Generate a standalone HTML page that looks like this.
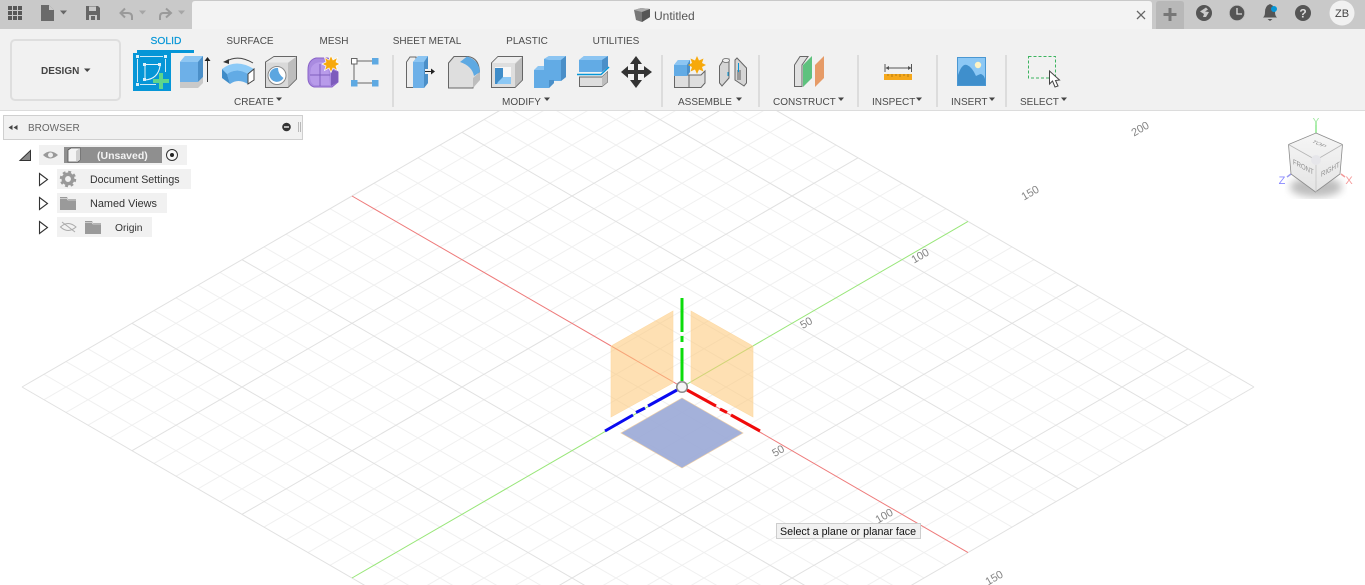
<!DOCTYPE html>
<html><head><meta charset="utf-8"><title>Untitled</title>
<style>
html,body{margin:0;padding:0;background:#fff;width:1365px;height:585px;overflow:hidden}
svg{display:block;font-family:"Liberation Sans",sans-serif}
text{fill:#4a4a4a;font-size:10px}
.c{text-anchor:middle}
.t{font-size:11px;fill:#858585}
</style></head><body>
<svg width="1365" height="585" viewBox="0 0 1365 585" xmlns="http://www.w3.org/2000/svg">
<defs>
<filter id="b"><feGaussianBlur stdDeviation="4"/></filter>
<clipPath id="v"><rect width="1365" height="585"/></clipPath>
<linearGradient id="cf" x1="0" y1="0" x2="0" y2="1"><stop offset="0" stop-color="#f6f6f6"/><stop offset="1" stop-color="#e4e4e4"/></linearGradient>
</defs>
<rect width="1365" height="585" fill="#fff"/>
<!-- grid -->
<g clip-path="url(#v)">
<g transform="matrix(1 .5788 1 -.5788 682 387)" fill="none">
<path vector-effect="non-scaling-stroke" stroke="#f0f0f0" stroke-width="1" d="M-308-330V286M-286-330V286M-264-330V286M-242-330V286M-198-330V286M-176-330V286M-154-330V286M-132-330V286M-88-330V286M-66-330V286M-44-330V286M-22-330V286M22-330V286M44-330V286M66-330V286M88-330V286M132-330V286M154-330V286M176-330V286M198-330V286M242-330V286M264-330V286M-330-308H286M-330-286H286M-330-264H286M-330-242H286M-330-198H286M-330-176H286M-330-154H286M-330-132H286M-330-88H286M-330-66H286M-330-44H286M-330-22H286M-330 22H286M-330 44H286M-330 66H286M-330 88H286M-330 132H286M-330 154H286M-330 176H286M-330 198H286M-330 242H286M-330 264H286"/>
<path vector-effect="non-scaling-stroke" stroke="#e1e1e1" stroke-width="1" d="M-330-330V286M-220-330V286M-110-330V286M110-330V286M220-330V286M286-330V286M-330-330H286M-330-220H286M-330-110H286M-330 110H286M-330 220H286M-330 286H286"/>
<path vector-effect="non-scaling-stroke" stroke="#ee7a7a" stroke-width="1" d="M-330 0H286"/>
<path vector-effect="non-scaling-stroke" stroke="#98e678" stroke-width="1" d="M0-330V286"/>
</g>
</g>
<!-- grid labels -->
<g font-size="11">
<text class="t c" transform="translate(1142 132) rotate(-30)">200</text>
<text class="t c" transform="translate(1032 196) rotate(-30)">150</text>
<text class="t c" transform="translate(922 259) rotate(-30)">100</text>
<text class="t c" transform="translate(808 326) rotate(-30)">50</text>
<text class="t c" transform="translate(780 454) rotate(-30)">50</text>
<text class="t c" transform="translate(886 519) rotate(-30)">100</text>
<text class="t c" transform="translate(996 581) rotate(-30)">150</text>
</g>
<!-- planes -->
<path d="M673 311L611 346V417L673 383Z" fill="#fdc878" fill-opacity=".56" stroke="#fcd9a5" stroke-width=".6"/>
<path d="M691 311L753 346V417L691 383Z" fill="#fdc878" fill-opacity=".56" stroke="#fcd9a5" stroke-width=".6"/>
<path d="M682 398L743 433L682 468L621 433Z" fill="#9aa8d6" fill-opacity=".9" stroke="#f0cfa5" stroke-width=".7"/>
<!-- axes -->
<path d="M682 298V332M682 336V342M682 348V381" stroke="#0cdc0c" stroke-width="3" fill="none"/>
<path d="M677 390L648 406M645 408L636 412.500M633 415L605 431" stroke="#0a0af0" stroke-width="3" fill="none"/>
<path d="M687 390L716 406M720 409L727 412.500M731 415L760 431" stroke="#f00a0a" stroke-width="3" fill="none"/>
<circle cx="682" cy="387" r="5.300" fill="#f6f6f6" stroke="#8a8a8a" stroke-width="1.500"/>
<!-- top bar -->
<rect width="1365" height="29" fill="#c9c9c9"/>
<path d="M192 29V4Q192 1 195 1H1149Q1152 1 1152 4V29Z" fill="#f3f3f3"/>
<rect x="0" y="29" width="1365" height="81" fill="#f1f1f1"/>
<rect x="0" y="110" width="1365" height="1" fill="#dcdcdc"/>
<!-- top-left icons -->
<g fill="#585858"><path d="M8 6h4v4H8zM13 6h4v4h-4zM18 6h4v4h-4zM8 11h4v4H8zM13 11h4v4h-4zM18 11h4v4h-4zM8 16h4v4H8zM13 16h4v4h-4zM18 16h4v4h-4z"/></g>
<path d="M41 5H49L54 10V21H41Z" fill="#6a6a6a"/>
<path d="M49 5V10H54Z" fill="#c9c9c9"/>
<path d="M60 10.500H67L63.500 14.500Z" fill="#666"/>
<path d="M86 6H98L100 8V20H86Z" fill="#666"/>
<path d="M89 6.500H96V11H89ZM89 15H97V20H89Z" fill="#c9c9c9"/>
<path d="M91 16H95V20H91Z" fill="#666"/>
<g fill="none" stroke="#9a9a9a" stroke-width="2">
<path d="M121 13H128Q132 13 132 17V20"/><path d="M125 8.500L120.500 13L125 17.500"/>
<path d="M170 13H163Q160 13 160 17V20"/><path d="M166 8.500L171 13L166 17.500"/>
</g>
<path d="M139 10.500H146L142.500 14.500ZM178 10.500H185L181.500 14.500Z" fill="#a6a6a6"/>
<!-- title -->
<path d="M634 10L641 8L650 9V17L642 22L636 20Z" fill="#777"/>
<path d="M634 10L641 8L650 9L642 12Z" fill="#aaa"/>
<path d="M642 12L650 9V17L642 22Z" fill="#555"/>
<text x="654" y="20" style="font-size:12px;fill:#555">Untitled</text>
<path d="M1137 11L1145 19M1145 11L1137 19" stroke="#666" stroke-width="1.300" fill="none"/>
<!-- right top -->
<path d="M1156 4Q1156 1 1159 1H1181Q1184 1 1184 4V29H1156Z" fill="#b8b8b8"/>
<path d="M1170 8V21M1163.500 14.500H1176.500" stroke="#777" stroke-width="3" fill="none"/>
<circle cx="1204" cy="13" r="8" fill="#555"/>
<path d="M1200 11.500L1206 7.500L1208 9.500L1205 11.500L1209 12L1206 17H1203L1204 14Z" fill="#c9c9c9"/>
<circle cx="1237" cy="13" r="7.500" fill="#555" stroke="#555"/>
<circle cx="1237" cy="13" r="7.700" fill="none" stroke="#c9c9c9" stroke-width=".7"/>
<path d="M1237 8V14H1242" stroke="#ddd" stroke-width="1.300" fill="none"/>
<path d="M1270 4Q1265 6 1265 12Q1265 16 1263 17.500H1277Q1275 16 1275 12Q1275 6 1270 4Z" fill="#555"/>
<path d="M1267.500 19H1272.500L1270 21Z" fill="#555"/>
<circle cx="1274" cy="9" r="3" fill="#0696d7"/>
<circle cx="1303" cy="13" r="8" fill="#555"/>
<text class="c" x="1303" y="17.500" style="font-size:12px;font-weight:bold;fill:#ddd">?</text>
<circle cx="1342" cy="13" r="12.500" fill="#f1f1f1"/>
<text class="c" x="1342" y="17" style="font-size:11px;fill:#444">ZB</text>
<!-- design button -->
<rect x="11" y="40" width="109" height="60" rx="4" fill="#f1f1f1" stroke="#dedede" stroke-width="2"/>
<text x="41" y="74" style="font-weight:bold;fill:#444">DESIGN</text>
<path d="M84 68.500H90.500L87.200 72Z" fill="#444"/>
<!-- tabs -->
<text class="c" x="166" y="44" style="fill:#0696d7;font-size:10.300px;stroke:#0696d7;stroke-width:.2">SOLID</text>
<text class="c" x="250" y="44">SURFACE</text>
<text class="c" x="334" y="44">MESH</text>
<text class="c" x="427" y="44">SHEET METAL</text>
<text class="c" x="527" y="44">PLASTIC</text>
<text class="c" x="616" y="44">UTILITIES</text>
<rect x="137" y="50" width="57" height="3" fill="#0696d7"/>
<!-- separators -->
<path d="M393 55V107M662 55V107M759 55V107M858 55V107M937 55V107M1006 55V107" stroke="#dcdcdc" stroke-width="2"/>
<!-- sketch icon -->
<rect x="133" y="53" width="38" height="38" fill="#0696d7"/>
<g fill="none" stroke="#cfeaf7" stroke-width="1">
<path d="M140 56.500H163M137.500 59V82M140 84.500H156M165.500 59V72"/>
<path d="M145 64.500H160M145 66V79M145 80Q158 79 160 66" stroke="#e8f5fb"/>
</g>
<path d="M136 55h3v3h-3zM164 55h3v3h-3zM136 83h3v3h-3zM143 63h3v3h-3zM158 63h3v3h-3zM143 78h3v3h-3z" fill="#dff0f9"/>
<path d="M159 73H163V79H169V83H163V89H159V83H153V79H159Z" fill="#5ed58c"/>
<!-- extrude -->
<path d="M180 62L185 56H203V77L198 82H180Z" fill="#6db0e8"/>
<path d="M180 62L185 56H203L198 62Z" fill="#8ec6f2"/>
<path d="M198 62L203 56V77L198 82Z" fill="#4b8fc8"/>
<path d="M180 82H198L203 77V83L198 88H180Z" fill="#c9c9c9"/>
<path d="M207.500 82V59" stroke="#333" stroke-width="1"/>
<path d="M204.500 61L207.500 57L210.500 61Z" fill="#222"/>
<!-- revolve -->
<path d="M222 69Q236 58 254 69L248 74Q237 67 227 74Z" fill="#8ccaf7"/>
<path d="M227 74Q237 67 248 74V84Q238 78 230 84Z" fill="#62abe5"/>
<path d="M222 69L227 74L230 84L222 78Z" fill="#3f8cc8"/>
<path d="M248 74L254 69V80L248 84Z" fill="#fff" stroke="#444" stroke-width="1"/>
<path d="M226 61.500Q238 54 253 63" fill="none" stroke="#444" stroke-width="1"/>
<path d="M223 62L229 59L229 64Z" fill="#333"/>
<!-- hole -->
<path d="M265.500 62L274 56.500H296.500V79L288 87.500H265.500Z" fill="#d9d9d9" stroke="#666" stroke-width="1"/>
<path d="M288 63V87L296 79V56.500Z" fill="#bdbdbd"/>
<path d="M266 62.500L274 57H296L288 62.500Z" fill="#eaeaea"/>
<circle cx="277" cy="75.500" r="9" fill="#fff" stroke="#888" stroke-width="1"/>
<path d="M269.500 75.500A7.500 7.500 0 0 1 278 68Q278 74 283.500 78A7.500 7.500 0 0 1 269.500 75.500Z" fill="#5ca6e0"/>
<!-- form -->
<path d="M308 70Q308 60 316 58L328 58L338 72V82L332 87H314Q308 85 308 78Z" fill="#a98be0" stroke="#8a63c8" stroke-width="1"/>
<path d="M311 68Q314 62 322 62L328 64L330 85H314Q310 83 310 76Z" fill="#b89bea"/>
<path d="M310 75H330M320 64V86" stroke="#7f5fbd" stroke-width="1" fill="none"/>
<path d="M331 69L338 72V82L331 86Z" fill="#7d5cbc"/>
<path d="M331 55.500L333 60L337.500 57.500L336 62L340 64L336 66L337.500 70.500L333 68L331 72.500L329 68L324.500 70.500L326 66L322 64L326 62L324.500 57.500L329 60Z" fill="#f7a90c" stroke="#fff" stroke-width=".7"/>
<!-- derive -->
<path d="M357 61H372M354 64V80M357 83H372" stroke="#666" stroke-width="1" fill="none"/>
<rect x="351.500" y="58.500" width="5.500" height="5.500" fill="#fff" stroke="#666"/>
<rect x="372" y="58" width="6.500" height="6.500" fill="#5ea9e2"/>
<rect x="351" y="80" width="6.500" height="6.500" fill="#5ea9e2"/>
<rect x="372" y="80" width="6.500" height="6.500" fill="#5ea9e2"/>
<!-- press pull -->
<path d="M406.500 62L410 57H416V87.500H406.500Z" fill="#eee" stroke="#666" stroke-width="1"/>
<path d="M413 62L418 56H428V83L424 88H413Z" fill="#6db0e8"/>
<path d="M424 60L428 56V83L424 88Z" fill="#4b8fc8"/>
<path d="M413 62L418 56H428L424 62Z" fill="#8cc5f2"/>
<rect x="425" y="69" width="5" height="5" fill="#f1f1f1"/>
<path d="M425 71.500H432" stroke="#222" stroke-width="1"/>
<path d="M431 68.500L435 71.500L431 74.500Z" fill="#222"/>
<!-- fillet -->
<path d="M448.500 63L454 56.500H468Q479 58 479.500 72L473 88H448.500Z" fill="#dedede" stroke="#666" stroke-width="1"/>
<path d="M460 62L467 56.500Q479 60 480 72L474 76Q472 66 460 62Z" fill="#5ea9e2"/>
<path d="M473 78L480 72V80L473 88Z" fill="#bdbdbd"/>
<!-- shell -->
<path d="M491.500 63L498 56.500H522.500V80L515 87.500H491.500Z" fill="#dedede" stroke="#666" stroke-width="1"/>
<path d="M515 64V87L522 80V57Z" fill="#bdbdbd"/>
<path d="M492 63L498 57H522L515 63Z" fill="#eee"/>
<rect x="495" y="67" width="16" height="17" fill="#f7f7f7"/>
<path d="M495 68H503V77H511V84H495Z" fill="#3f8cc8"/>
<path d="M498 82L503 77H511V84H497Z" fill="#8cc8f5"/>
<!-- combine -->
<path d="M544 68V59L549 56H566V77L561 81H554V83L549 88H534V70L538 68Z" fill="#62abe5"/>
<path d="M544 59L549 56H566L561 60H549Z" fill="#8cc5f2"/>
<path d="M561 60L566 56V77L561 81Z" fill="#4b8fc8"/>
<path d="M534 70L538 66H544V70Z" fill="#8cc5f2"/>
<path d="M549 80H554V83L549 88Z" fill="#4b8fc8"/>
<!-- split -->
<path d="M579 60L584 56H608V67L602 72H579Z" fill="#62abe5"/>
<path d="M579 60L584 56H608L602 60Z" fill="#8cc5f2"/>
<path d="M602 60L608 56V67L602 72Z" fill="#4b8fc8"/>
<path d="M577 74.500H601L609 67" stroke="#0696d7" stroke-width="1.500" fill="none"/>
<path d="M579.500 77H602L607.500 72V82L602 86.500H579.500Z" fill="#dedede" stroke="#666" stroke-width="1"/>
<path d="M602 77L607.500 72V82L602 86.500Z" fill="#bdbdbd"/>
<!-- move -->
<path d="M636 56L642 64H638V70H644V66L652 72L644 78V74H638V80H642L636 88L630 80H634V74H628V78L621 72L628 66V70H634V64H630Z" fill="#333"/>
<!-- assemble -->
<path d="M674.500 75H689V87.500H674.500ZM689 75H701L705 71V83L701 87.500H689Z" fill="#dedede" stroke="#666" stroke-width="1"/>
<path d="M674 65L678 60H690V72L687 76H674Z" fill="#62abe5"/>
<path d="M674 65L678 60H690L687 65Z" fill="#8cc5f2"/>
<path d="M687 65L690 60V72L687 76Z" fill="#4b8fc8"/>
<path d="M697 56L699 60.500L703.500 58.500L702 63L706 65L702 67L703.500 71.500L699 69.500L697 74L695 69.500L690.500 71.500L692 67L688 65L692 63L690.500 58.500L695 60.500Z" fill="#f7a90c"/>
<!-- joint -->
<path d="M719.500 66L724 59H729V78L722 86L719.500 83Z" fill="#d5d5d5" stroke="#666" stroke-width="1"/>
<ellipse cx="726" cy="60.500" rx="3.500" ry="2" fill="#eee" stroke="#666" stroke-width=".8"/>
<path d="M735 60L737 58L746.500 68V83L744 86L735 80Z" fill="#d5d5d5" stroke="#666" stroke-width="1"/>
<path d="M737 70H741V80H737Z" fill="#999"/>
<path d="M728 72V76M738.500 63V72" stroke="#0696d7" stroke-width="1"/>
<!-- construct -->
<path d="M794.500 65L800 56.500H808L802 65V86.500H794.500Z" fill="#e1e1e1" stroke="#666" stroke-width="1"/>
<path d="M803 65L812 56V78L803 87Z" fill="#5ec27e"/>
<path d="M815 65L824 56V78L815 87Z" fill="#e69b67"/>
<!-- inspect -->
<path d="M885 64V72M911.500 64V72" stroke="#555" stroke-width="1"/>
<path d="M886 68H911" stroke="#555" stroke-width="1"/>
<path d="M889 66L885.500 68L889 70ZM908 66L911.500 68L908 70Z" fill="#555"/>
<rect x="884" y="74" width="28" height="6" fill="#f5a81c"/>
<path d="M888 74V76M892 74V77M896 74V76M900 74V77M904 74V76M908 74V77" stroke="#a56f10" stroke-width=".8"/>
<!-- insert -->
<rect x="957" y="57" width="29" height="29" fill="#4a97d2"/>
<rect x="958" y="58" width="27" height="27" fill="#8cc8f5"/>
<path d="M958 75Q962 63 967 65Q972 67 976 76Q980 74 981 74Q984 75 985 79V85H958Z" fill="#3f8fcc"/>
<circle cx="978" cy="65" r="3.200" fill="#fdf3c4"/>
<!-- select -->
<rect x="1028.500" y="56.500" width="27" height="21.500" fill="none" stroke="#3cb45f" stroke-width="1" stroke-dasharray="3 2"/>
<path d="M1049.500 71V84L1052.500 81L1055 87L1058 86L1055.500 80.500L1059.500 80Z" fill="#fff" stroke="#444" stroke-width="1"/>
<!-- panel labels -->
<text x="234" y="105">CREATE</text><path d="M276 97.500H282L279 101Z" fill="#444"/>
<text x="502" y="105">MODIFY</text><path d="M544 97.500H550L547 101Z" fill="#444"/>
<text x="678" y="105">ASSEMBLE</text><path d="M736 97.500H742L739 101Z" fill="#444"/>
<text x="773" y="105">CONSTRUCT</text><path d="M838 97.500H844L841 101Z" fill="#444"/>
<text x="872" y="105">INSPECT</text><path d="M916 97.500H922L919 101Z" fill="#444"/>
<text x="951" y="105">INSERT</text><path d="M989 97.500H995L992 101Z" fill="#444"/>
<text x="1020" y="105">SELECT</text><path d="M1061 97.500H1067L1064 101Z" fill="#444"/>
<!-- browser -->
<rect x="3.500" y="115.500" width="299" height="24" fill="#f1f1f1" stroke="#cfcfcf"/>
<path d="M12.500 125V130L8.500 127.500ZM17.500 125V130L13.500 127.500Z" fill="#444"/>
<text x="28" y="131" style="fill:#666">BROWSER</text>
<circle cx="286.500" cy="127" r="4.300" fill="#333"/>
<rect x="284" y="126.300" width="5" height="1.400" fill="#f1f1f1"/>
<path d="M298.500 122V132M300.500 122V132" stroke="#aaa" stroke-width=".8"/>
<!-- tree -->
<path d="M20 160.500L30.500 150.500V160.500Z" fill="#888" stroke="#333" stroke-width="1"/>
<rect x="39" y="145" width="148" height="20" fill="#f1f1f1"/>
<rect x="64" y="147" width="98" height="16" fill="#8f8f8f"/>
<path d="M43 155Q50 148 58 155Q50 162 43 155Z" fill="#999"/>
<circle cx="50.500" cy="155" r="2.500" fill="#eee"/>
<path d="M68 150L71 148H80V160L78 162H68Z" fill="#f4f4f4" stroke="#555" stroke-width=".8"/>
<path d="M76 151L80 148V160L76 162Z" fill="#cfcfcf"/>
<text x="97" y="159" style="font-weight:bold;font-size:10.500px;fill:#f3f3f3">(Unsaved)</text>
<circle cx="172" cy="155" r="5.500" fill="#f8f8f8" stroke="#333" stroke-width="1"/>
<circle cx="172" cy="155" r="2" fill="#222"/>
<rect x="57" y="169" width="134" height="20" fill="#f1f1f1"/>
<rect x="57" y="193" width="110" height="20" fill="#f1f1f1"/>
<rect x="57" y="217" width="95" height="20" fill="#f1f1f1"/>
<path d="M39.500 173.500L47.500 179.500L39.500 185.500ZM39.500 197.500L47.500 203.500L39.500 209.500ZM39.500 221.500L47.500 227.500L39.500 233.500Z" fill="#fff" stroke="#333" stroke-width="1.100"/>
<circle cx="68" cy="179" r="4.700" fill="none" stroke="#999" stroke-width="3.500"/>
<circle cx="68" cy="179" r="7" fill="none" stroke="#999" stroke-width="2.500" stroke-dasharray="2.800 2.700"/>
<path d="M60 197H67L68 199H76V210H60Z" fill="#9a9a9a"/>
<path d="M60 198.500H67L68 200H76" fill="none" stroke="#e0e0e0" stroke-width=".8"/>
<path d="M85 221H92L93 223H101V234H85Z" fill="#9a9a9a"/>
<path d="M85 222.500H92L93 224H101" fill="none" stroke="#e0e0e0" stroke-width=".8"/>
<path d="M60.500 227Q68 220 76 227Q68 234 60.500 227Z" fill="none" stroke="#aaa" stroke-width="1"/>
<path d="M62 222L75 232" stroke="#aaa" stroke-width="1"/>
<text x="90" y="183" style="fill:#333;font-size:10.600px">Document Settings</text>
<text x="90" y="207" style="fill:#333;font-size:10.900px">Named Views</text>
<text x="115" y="231" style="fill:#333;font-size:10.300px">Origin</text>
<!-- view cube -->
<ellipse cx="1316" cy="187" rx="26" ry="10" fill="#888" filter="url(#b)" opacity=".55"/>
<path d="M1316 122V133" stroke="#8ce88c" stroke-width="1.500"/>
<path d="M1341 174L1345 177" stroke="#f29a9a" stroke-width="1.500"/>
<path d="M1291 174L1287 177" stroke="#9a9af2" stroke-width="1.500"/>
<path d="M1316 133L1342.500 144.500L1340 174L1315.500 192L1291 174L1288.500 144.500Z" fill="url(#cf)" stroke="#8c8c8c" stroke-width=".8"/>
<path d="M1288.500 144.500L1316 160L1342.500 144.500" fill="none" stroke="#b5b5b5" stroke-width=".8"/>
<path d="M1316 160V192" fill="none" stroke="#c4c4c4" stroke-width=".8"/>
<circle cx="1316" cy="160" r="5" fill="#e6e6ea"/>
<text transform="matrix(.8 .35 -.6 .35 1311 142)" style="font-size:8px;fill:#8c8c8c">TOP</text>
<text transform="matrix(.8 .42 0 1 1293 164)" style="font-size:7.500px;fill:#8c8c8c">FRONT</text>
<text transform="matrix(.8 -.45 0 1 1321 177)" style="font-size:7.500px;fill:#8c8c8c">RIGHT</text>
<text class="c" x="1316" y="125" style="font-size:10px;fill:#9fe89f">Y</text>
<text class="c" x="1282" y="184" style="font-size:11px;fill:#8888ff">Z</text>
<text class="c" x="1349" y="184" style="font-size:11px;fill:#f59a9a">X</text>
<!-- tooltip -->
<rect x="776.500" y="523.500" width="144" height="15" fill="#f1f1f1" stroke="#cdcdcd"/>
<text x="780" y="535" style="font-size:10.700px;fill:#111">Select a plane or planar face</text>
</svg>
</body></html>
